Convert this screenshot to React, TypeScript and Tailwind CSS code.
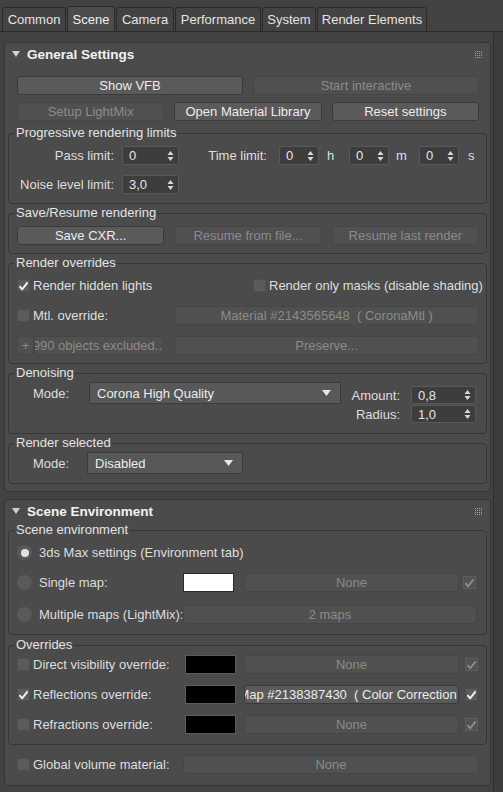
import React from 'react';

// 3ds Max / Corona render setup dialog – Scene tab

const TABS = [
  { label: 'Common', w: 'w-[64px]' },
  { label: 'Scene', w: 'w-[48px]', active: true },
  { label: 'Camera', w: 'w-[58px]' },
  { label: 'Performance', w: 'w-[86px]' },
  { label: 'System', w: 'w-[54px]' },
  { label: 'Render Elements', w: 'w-[110px]' },
];

type Kids = { children?: React.ReactNode; className?: string };

const Btn: React.FC<Kids & { disabled?: boolean }> = ({ children, disabled = false, className = '' }) => (
  <div
    className={`flex items-center justify-center overflow-hidden whitespace-nowrap rounded-[3px] border ${
      disabled
        ? 'border-[#464646] bg-[#505050] text-[#8b8b8b]'
        : 'border-[#3a3a3a] bg-[#5a5a5a] text-[#ececec]'
    } ${className}`}
  >
    {children}
  </div>
);

const Spinner: React.FC<{ value: string; className?: string }> = ({ value, className = '' }) => (
  <div
    className={`flex h-full items-center rounded-[2px] border border-[#585858] bg-[#3d3d3d] pl-[6px] pr-[4px] text-[#e6e6e6] ${className}`}
  >
    <span className="flex-1">{value}</span>
    <svg width="7" height="12" viewBox="0 0 7 12">
      <polygon points="0.5,5 3.5,1 6.5,5" fill="#d8d8d8" />
      <polygon points="0.5,7 3.5,11 6.5,7" fill="#d8d8d8" />
    </svg>
  </div>
);

const Dropdown: React.FC<{ value: string; className?: string }> = ({ value, className = '' }) => (
  <div className={`flex h-[22px] items-center border border-[#3b3b3b] bg-[#585858] pl-[7px] pr-[9px] ${className}`}>
    <span className="flex-1 text-[#ececec]">{value}</span>
    <svg width="9" height="6" viewBox="0 0 9 6">
      <polygon points="0,0 9,0 4.5,6" fill="#e6e6e6" />
    </svg>
  </div>
);

const Check: React.FC<{ checked?: boolean; disabled?: boolean; className?: string }> = ({
  checked = false,
  disabled = false,
  className = '',
}) => (
  <div
    className={`flex h-[13px] w-[13px] shrink-0 items-center justify-center border ${
      disabled ? 'border-[#5e5e5e] bg-[#525252]' : 'border-[#4e4e4e] bg-[#5b5b5b]'
    } ${className}`}
  >
    {checked && (
      <svg width="11" height="10" viewBox="0 0 11 10">
        <path
          d="M1.5 5.2 L4.2 8.3 L9.6 1.4"
          stroke={disabled ? '#8c8c8c' : '#f4f4f4'}
          strokeWidth="2"
          fill="none"
        />
      </svg>
    )}
  </div>
);

const CheckLabel: React.FC<{ checked?: boolean; label: string; className?: string }> = ({ checked, label, className = '' }) => (
  <div className={`flex items-center ${className}`}>
    <Check checked={checked} />
    <span className="ml-[3px] whitespace-nowrap">{label}</span>
  </div>
);

const Radio: React.FC<{ selected?: boolean }> = ({ selected = false }) => (
  <div className="flex h-[15px] w-[15px] shrink-0 items-center justify-center rounded-full bg-[#5a5a5a]">
    {selected && <div className="h-[8px] w-[8px] rounded-full bg-[#e2e2e2]" />}
  </div>
);

const Grip = () => (
  <svg width="7" height="7" viewBox="0 0 7 7" className="ml-auto">
    {[0, 2, 4, 6].map(y => [0, 2, 4, 6].map(x => <rect key={`${x}-${y}`} x={x} y={y} width="1" height="1" fill="#a0a0a0" />))}
  </svg>
);

const Rollout: React.FC<Kids & { title: string }> = ({ title, children, className = '' }) => (
  <div className={`w-[487px] rounded-[4px] border border-[#353535] bg-[#4b4b4b] ${className}`}>
    <div className="flex h-[22px] items-center pl-[7px] pr-[8px]">
      <svg width="8" height="6" viewBox="0 0 8 6">
        <polygon points="0,0 8,0 4,6" fill="#cfcfcf" />
      </svg>
      <span className="ml-[7px] text-[13.5px] font-bold text-[#f2f2f2]">{title}</span>
      <Grip />
    </div>
    {children}
  </div>
);

const Group: React.FC<Kids & { title: string }> = ({ title, children, className = '' }) => (
  <fieldset className={`rounded-[4px] border border-[#363636] ${className}`}>
    <legend className="ml-[6px] px-[1px] leading-[14px] text-[#e4e4e4]">{title}</legend>
    {children}
  </fieldset>
);

export default function App() {
  return (
    <div className="h-[792px] w-[503px] overflow-hidden bg-[#424242] font-['Liberation_Sans',Arial,sans-serif] text-[13px] leading-[15px] text-[#dedede]">
      {/* tabs */}
      <div className="flex h-[32px] items-end gap-[1px] border-b border-[#2a2a2a] pl-[2px]">
        {TABS.map(t => (
          <div
            key={t.label}
            className={`flex items-center justify-center rounded-t-[3px] border border-b-0 border-[#2b2b2b] ${t.w} ${
              t.active ? 'h-[25px] bg-[#4c4c4c] text-[#f0f0f0]' : 'h-[24px] bg-[#434343] text-[#e4e4e4]'
            }`}
          >
            {t.label}
          </div>
        ))}
      </div>

      <div className="flex">
        <div className="pl-[4px] pt-[10px]">
          {/* General Settings */}
          <Rollout title="General Settings">
            <div className="pl-[12px] pr-[11px] pt-[11px]">
              <div className="grid h-[19px] grid-cols-2 gap-[10px]">
                <Btn>Show VFB</Btn>
                <Btn disabled>Start interactive</Btn>
              </div>
              <div className="mt-[7px] grid h-[19px] grid-cols-3 gap-[10px]">
                <Btn disabled>Setup LightMix</Btn>
                <Btn>Open Material Library</Btn>
                <Btn>Reset settings</Btn>
              </div>
            </div>

            <div className="px-[3px] pb-[7px] pt-[5px]">
              <Group title="Progressive rendering limits">
                <div className="pb-[9px] pt-[6px]">
                  <div className="flex h-[19px] items-center">
                    <span className="w-[105px] text-right">Pass limit:</span>
                    <Spinner value="0" className="ml-[8px] w-[57px]" />
                    <span className="w-[88px] text-right">Time limit:</span>
                    <Spinner value="0" className="ml-[12px] w-[40px]" />
                    <span className="w-[30px] pl-[8px]">h</span>
                    <Spinner value="0" className="w-[40px]" />
                    <span className="w-[30px] pl-[7px]">m</span>
                    <Spinner value="0" className="w-[40px]" />
                    <span className="pl-[9px]">s</span>
                  </div>
                  <div className="mt-[10px] flex h-[19px] items-center">
                    <span className="w-[105px] text-right">Noise level limit:</span>
                    <Spinner value="3,0" className="ml-[8px] w-[57px]" />
                  </div>
                </div>
              </Group>

              <Group title="Save/Resume rendering" className="mt-[2px]">
                <div className="pb-[8px] pl-[8px] pr-[7px] pt-[6px]">
                  <div className="grid h-[19px] grid-cols-3 gap-[10px]">
                    <Btn>Save CXR...</Btn>
                    <Btn disabled>Resume from file...</Btn>
                    <Btn disabled>Resume last render</Btn>
                  </div>
                </div>
              </Group>

              <Group title="Render overrides" className="mt-[2px]">
                <div className="pb-[8px] pl-[8px] pr-[7px] pt-[6px]">
                  <div className="grid h-[19px] grid-cols-2 gap-[10px]">
                    <CheckLabel checked label="Render hidden lights" />
                    <CheckLabel label="Render only masks (disable shading)" />
                  </div>
                  <div className="mt-[11px] grid h-[19px] grid-cols-3 gap-[10px]">
                    <CheckLabel label="Mtl. override:" />
                    <Btn disabled className="col-span-2">
                      Material #2143565648&nbsp;&nbsp;( CoronaMtl )
                    </Btn>
                  </div>
                  <div className="mt-[11px] grid h-[19px] grid-cols-3 gap-[10px]">
                    <div className="flex">
                      <Btn disabled className="w-[17px] shrink-0">+</Btn>
                      <Btn disabled className="min-w-0 flex-1">990 objects excluded...</Btn>
                    </div>
                    <Btn disabled className="col-span-2">Preserve...</Btn>
                  </div>
                </div>
              </Group>

              <Group title="Denoising" className="mt-[2px]">
                <div className="flex pb-[10px] pt-[2px]">
                  <span className="flex h-[22px] w-[80px] items-center pl-[24px]">Mode:</span>
                  <Dropdown value="Corona High Quality" className="w-[252px]" />
                  <div className="mt-[4px] flex flex-col gap-[1px]">
                    <div className="flex h-[18px] items-center">
                      <span className="w-[59px] text-right">Amount:</span>
                      <Spinner value="0,8" className="ml-[11px] w-[65px]" />
                    </div>
                    <div className="flex h-[18px] items-center">
                      <span className="w-[59px] text-right">Radius:</span>
                      <Spinner value="1,0" className="ml-[11px] w-[65px]" />
                    </div>
                  </div>
                </div>
              </Group>

              <Group title="Render selected" className="mt-[2px]">
                <div className="flex pb-[9px] pt-[2px]">
                  <span className="flex h-[22px] w-[78px] items-center pl-[24px]">Mode:</span>
                  <Dropdown value="Disabled" className="w-[156px]" />
                </div>
              </Group>
            </div>
          </Rollout>

          {/* Scene Environment */}
          <Rollout title="Scene Environment" className="mt-[7px]">
            <div className="px-[3px]">
              <Group title="Scene environment" className="mt-[1px]">
                <div className="pb-[10px] pl-[8px] pt-[6px]">
                  <div className="flex h-[19px] items-center">
                    <Radio selected />
                    <span className="ml-[7px]">3ds Max settings (Environment tab)</span>
                  </div>
                  <div className="mt-[11px] flex h-[19px] items-center">
                    <div className="flex w-[166px] items-center">
                      <Radio />
                      <span className="ml-[7px]">Single map:</span>
                    </div>
                    <div className="h-[19px] w-[51px] border border-[#2a2a2a] bg-white" />
                    <Btn disabled className="ml-[10px] h-[19px] w-[215px]">None</Btn>
                    <Check checked disabled className="ml-[4px]" />
                  </div>
                  <div className="mt-[13px] flex h-[19px] items-center">
                    <div className="flex w-[166px] items-center">
                      <Radio />
                      <span className="ml-[7px] whitespace-nowrap">Multiple maps (LightMix):</span>
                    </div>
                    <Btn disabled className="h-[19px] w-[294px]">2 maps</Btn>
                  </div>
                </div>
              </Group>

              <Group title="Overrides" className="mt-[3px]">
                <div className="pb-[10px] pl-[8px] pt-[3px]">
                  {[
                    { label: 'Direct visibility override:', on: false, map: 'None' },
                    { label: 'Reflections override:', on: true, map: 'Map #2138387430  ( Color Correction )' },
                    { label: 'Refractions override:', on: false, map: 'None' },
                  ].map((r, i) => (
                    <div key={r.label} className={`flex h-[19px] items-center ${i > 0 ? 'mt-[11px]' : ''}`}>
                      <CheckLabel checked={r.on} label={r.label} className="w-[168px]" />
                      <div className="h-[19px] w-[51px] border border-[#5c5c5c] bg-black" />
                      <Btn disabled={!r.on} className="ml-[8px] h-[19px] w-[215px] whitespace-pre">
                        {r.map}
                      </Btn>
                      <Check checked disabled={!r.on} className="ml-[6px]" />
                    </div>
                  ))}
                </div>
              </Group>
            </div>

            <div className="pb-[11px] pl-[12px] pt-[10px]">
              <div className="flex h-[19px] items-center">
                <CheckLabel label="Global volume material:" className="w-[166px]" />
                <Btn disabled className="h-[19px] w-[296px]">None</Btn>
              </div>
            </div>
          </Rollout>
        </div>

        {/* scroll strip */}
        <div className="ml-auto h-[760px] w-[10px] border-l border-[#2e2e2e] bg-[#3c3c3c]" />
      </div>
    </div>
  );
}
